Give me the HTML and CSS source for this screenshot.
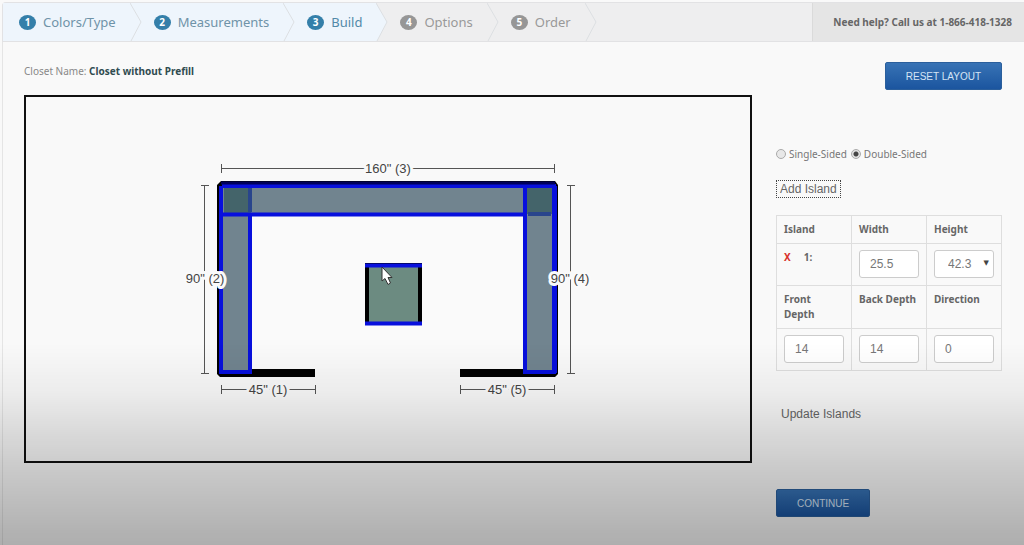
FILE: index.html
```
<!DOCTYPE html>
<html lang="en">
<head>
<meta charset="utf-8">
<title>Closet Builder</title>
<link rel="stylesheet" href="styles.css">
</head>
<body>
<div class="page">
  <header class="topbar">
    <ol class="steps">
      <li class="step done"><a href="#colors"><span class="badge">1</span>Colors/Type</a><svg class="chevron" viewBox="0 0 12 38"><path d="M0 0 11 19 1 38H0Z"/><path class="edge" d="M0 0 11 19 1 38"/></svg></li>
      <li class="step done"><a href="#measurements"><span class="badge">2</span>Measurements</a><svg class="chevron" viewBox="0 0 12 38"><path d="M0 0 11 19 1 38H0Z"/><path class="edge" d="M0 0 11 19 1 38"/></svg></li>
      <li class="step current"><a href="#build" aria-current="step"><span class="badge">3</span>Build</a><svg class="chevron" viewBox="0 0 12 38"><path d="M0 0 11 19 1 38H0Z"/><path class="edge" d="M0 0 11 19 1 38"/></svg></li>
      <li class="step"><a href="#options"><span class="badge">4</span>Options</a><svg class="chevron" viewBox="0 0 12 38"><path d="M0 0 11 19 1 38H0Z"/><path class="edge" d="M0 0 11 19 1 38"/></svg></li>
      <li class="step"><a href="#order"><span class="badge">5</span>Order</a><svg class="chevron" viewBox="0 0 12 38"><path d="M0 0 11 19 1 38H0Z"/><path class="edge" d="M0 0 11 19 1 38"/></svg></li>
    </ol>
    <p class="help">Need help? Call us at 1-866-418-1328</p>
  </header>

  <main class="builder">
    <section class="plan">
      <p class="closet-name">Closet Name: <strong>Closet without Prefill</strong></p>
      <div class="canvas">
        <svg viewBox="26 97 724 364" role="img" aria-label="Closet floor plan">
          <!-- closet interior -->
          <rect x="252" y="216" width="272" height="153" fill="#fff" opacity=".2"/>
          <!-- walls -->
          <path d="M221 181H555L558 185V374L555 377H460V369H550V189H225V369H315V377H220L217 374V185Z" fill="#000"/>
          <!-- shelving -->
          <rect x="223" y="187" width="329" height="28" fill="#71848f"/>
          <rect x="223" y="187" width="28" height="184" fill="#71848f"/>
          <rect x="525" y="187" width="28" height="184" fill="#71848f"/>
          <rect x="224" y="188" width="27" height="26" fill="#44646a"/>
          <rect x="525" y="188" width="27" height="26" fill="#44646a"/>
          <g fill="none" stroke="#0810dd">
            <path d="M222 186H554V372H525V216M250 216V372H221V186" stroke-width="4"/>
            <path d="M220 186V373M556 186V373" stroke-width="2"/>
            <path d="M222 214.500H523" stroke-width="4"/>
          </g>
          <path d="M250 188V212M528 214H551" stroke="#29458c" stroke-width="4"/>
          <path d="M525 188V217" stroke="#0810dd" stroke-width="4"/>
          <path d="M221 183H555" stroke="#00005c" stroke-width="3"/>
          <!-- island -->
          <rect x="365" y="263" width="57" height="62" fill="#000"/>
          <rect x="369" y="267" width="49" height="55" fill="#6c8b81"/>
          <path d="M365 265.500H422M365 323.500H422" stroke="#0810dd" stroke-width="4"/>
          <!-- dimension lines -->
          <path class="dim" d="M221.500 164V173M221 168.500H555M554.500 164V173M201 185.500H209M204.500 185V373M201 373.500H209M567 185.500H575M570.500 185V373M567 373.500H575M221.500 385V394M221 389.500H315M315.500 385V394M460.500 385V394M460 389.500H554M554.500 385V394"/>
          <g class="label">
            <text x="388" y="173">160" (3)</text>
            <text x="205" y="283">90" (2)</text>
            <text x="570" y="283">90" (4)</text>
            <text x="268" y="394">45" (1)</text>
            <text x="507" y="394">45" (5)</text>
          </g>
          <path d="M382 267V281L385 278.500 388 284.500 390.500 283 388 277.500H392Z" fill="#fff" stroke="#333"/>
        </svg>
      </div>
    </section>

    <form class="side">
      <button type="button" class="btn reset">RESET LAYOUT</button>
      <div class="sides">
        <input type="radio" name="sides" id="single"><label for="single">Single-Sided</label>
        <input type="radio" name="sides" id="double" checked><label for="double">Double-Sided</label>
      </div>
      <button type="button" class="plain add">Add Island</button>
      <table class="islands">
        <tr><th>Island</th><th><label for="width">Width</label></th><th><label for="height">Height</label></th></tr>
        <tr>
          <td class="island"><button type="button" class="remove" aria-label="Remove island 1">X</button>1:</td>
          <td><input class="field" id="width" value="25.5"></td>
          <td><span class="pick"><select class="field" id="height"><option>42.3</option></select></span></td>
        </tr>
        <tr><th><label for="front">Front<br>Depth</label></th><th><label for="back">Back Depth</label></th><th><label for="direction">Direction</label></th></tr>
        <tr>
          <td><input class="field" id="front" value="14"></td>
          <td><input class="field" id="back" value="14"></td>
          <td><input class="field" id="direction" value="0"></td>
        </tr>
      </table>
      <button type="button" class="plain update">Update Islands</button>
      <button type="submit" class="btn continue">CONTINUE</button>
    </form>
  </main>
</div>
</body>
</html>
```
FILE: styles.css
```
* { box-sizing: border-box; }
body {
  margin: 0;
  background: #f9f9f9;
  color: #666;
  font: 10px/15px "Noto Sans", "Open Sans", sans-serif;
}
p, ol { margin: 0; padding: 0; }
button, input, select { font-family: inherit; color: inherit; }

/* shade that darkens the foot of the window */
body::after {
  content: "";
  position: fixed;
  inset: 0;
  pointer-events: none;
  background: linear-gradient(transparent 63%, rgba(0, 0, 0, .05) 72%, rgba(0, 0, 0, .18) 85%, rgba(0, 0, 0, .3));
}

.page {
  min-height: 100vh;
  padding-top: 2px;
}
.topbar {
  display: flex;
  justify-content: space-between;
  margin-left: 2px;
  height: 40px;
  background: #eeeeef;
  border: 1px solid #e2e2e4;
  border-right: 0;
  border-radius: 4px 0 0 0;
}
.steps { display: flex; list-style: none; }
.step { display: flex; background: #eeeeef; }
.step a {
  display: flex;
  align-items: center;
  gap: 7px;
  padding: 0 14px 0 12px;
  color: #999;
  font-size: 13px;
  text-decoration: none;
}
.step:first-child a { padding-left: 16px; }
.badge {
  width: 17px;
  height: 15px;
  border-radius: 50%;
  background: #969696;
  color: #fff;
  font: bold 10px/15px "Noto Sans", sans-serif;
  text-align: center;
}
.step.done, .step.current { background: #eef5fc; }
.step.done a { color: #6f93a8; }
.step.current a { color: #5189a8; }
.step .badge { flex: none; }
.done .badge, .current .badge { background: #347fa9; }
.chevron { width: 12px; height: 38px; fill: #eeeeef; }
.done .chevron, .current .chevron { fill: #eef5fc; }
.current .chevron { background: #eeeeef; }
.chevron .edge { fill: none; stroke: #dcdfe2; }
.help {
  padding: 0 12px 0 20px;
  background: #e5e5e5;
  border-left: 1px solid #dadada;
  font-weight: bold;
  line-height: 38px;
  white-space: nowrap;
}

.builder {
  display: grid;
  grid-template-columns: 1fr 226px;
  gap: 24px;
  margin-left: 2px;
  padding: 20px 22px 28px 21px;
  border-left: 1px solid rgba(0, 0, 0, .08);
}
.closet-name { margin: 2px 0 16px; color: #888; }
.closet-name strong { color: #304c50; }
.canvas { border: 2px solid #111; }
.canvas svg { display: block; width: 100%; height: auto; }
.dim { fill: none; stroke: #555; }
.label {
  fill: #444;
  stroke: #fafafa;
  stroke-width: 6px;
  stroke-linejoin: round;
  paint-order: stroke;
  font: 13px "Liberation Sans", Arial, sans-serif;
  text-anchor: middle;
}

.side { display: flex; flex-direction: column; align-items: flex-start; }
.btn {
  height: 28px;
  padding: 0 20px;
  border: 1px solid #2b5f9c;
  border-radius: 2px;
  background: linear-gradient(#3873b5, #1b559f);
  color: #d5e4f5;
  font: 10px "Liberation Sans", Arial, sans-serif;
}
.reset { align-self: flex-end; }
.sides {
  display: flex;
  align-items: center;
  margin: 57px 0 18px;
  white-space: nowrap;
}
.sides input {
  appearance: none;
  width: 10px;
  height: 10px;
  margin: 0 3px 2px 0;
  border: 1px solid #aaa;
  border-radius: 50%;
  background: #e8e8e8;
}
.sides input:checked { background: radial-gradient(#444 0 2px, #e2e2e2 3px); }
.sides label { margin-right: 4px; color: #777; }
.plain {
  padding: 0 4px;
  border: 1px solid transparent;
  background: none;
  color: #666;
  font: 12px/16px "Liberation Sans", Arial, sans-serif;
}
.add { margin-bottom: 17px; padding: 0 3px; border: 1px dotted #444; }

.islands {
  width: 100%;
  table-layout: fixed;
  border-collapse: collapse;
}
.islands th, .islands td {
  padding: 6px 7px;
  border: 1px solid #dedede;
  text-align: left;
  vertical-align: top;
}
.islands th { padding-right: 0; }
.islands td { padding-bottom: 7px; }
.island { font-weight: bold; }
.remove {
  margin: 0 13px 0 0;
  padding: 0;
  border: 0;
  background: none;
  color: #d8322c;
  font-size: 10px;
  font-weight: bold;
}
.field {
  display: block;
  width: 100%;
  height: 28px;
  padding: 0 10px;
  border: 1px solid #ccc;
  border-radius: 3px;
  background: #fff;
  color: #777;
  font: 12px "Liberation Sans", Arial, sans-serif;
}
.pick { display: block; position: relative; }
.pick select { appearance: none; padding-left: 13px; }
.pick::after {
  content: "▼";
  position: absolute;
  right: 5px;
  top: 6px;
  color: #444;
  font: 7px/15px "DejaVu Sans", sans-serif;
  pointer-events: none;
}
.update { margin: 34px 0 66px; }
```
